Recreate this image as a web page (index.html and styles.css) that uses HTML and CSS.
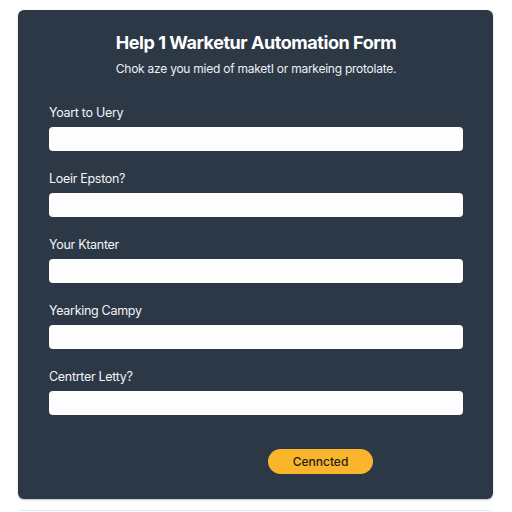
FILE: index.html
```html
<!DOCTYPE html>
<html lang="en">
<head>
  <meta charset="UTF-8">
  <title>Marketing Automation Form</title>
  <link rel="stylesheet" href="styles.css">
</head>
<body>
  <div class="card">
    <h2 class="title">Help 1 Warketur Automation Form</h2>
    <p class="subtitle">Chok aze you mied of maketI or markeing protolate.</p>

    <div class="fields">
      <label class="field">
        <span class="field-label">Yoart to Uery</span>
        <input type="text" class="field-input">
      </label>
      <label class="field">
        <span class="field-label">Loeir Epston?</span>
        <input type="text" class="field-input">
      </label>
      <label class="field">
        <span class="field-label">Your Ktanter</span>
        <input type="text" class="field-input">
      </label>
      <label class="field">
        <span class="field-label">Yearking Campy</span>
        <input type="text" class="field-input">
      </label>
      <label class="field">
        <span class="field-label">Centrter Letty?</span>
        <input type="text" class="field-input">
      </label>
    </div>

    <div class="actions">
      <button class="submit-button">Cenncted</button>
    </div>
  </div>

  <!-- 次のカードの上端 -->
  <div class="next-card"></div>
</body>
</html>
```

FILE: styles.css
```css
/* 全体 */
body {
  margin: 0;
  padding: 10px 19px 0 18px;
  background: #ffffff;
  font-family: 'Inter', 'Liberation Sans', sans-serif;
  box-sizing: border-box;
}

/* カード */
.card {
  height: 489px;
  box-sizing: border-box;
  padding: 22px 30px 0 31px;
  background: #2d3846;
  border-radius: 6px;
  box-shadow: 0 1px 2px rgba(0, 0, 0, 0.25);
}

.title {
  margin: 0;
  font-size: 18px;
  line-height: 22px;
  font-weight: 700;
  color: #ffffff;
  text-align: center;
  letter-spacing: -0.45px;
}

.subtitle {
  margin: 7px 0 0;
  font-size: 12px;
  line-height: 16px;
  color: #eef0f3;
  text-align: center;
  letter-spacing: -0.25px;
}

/* 入力欄 */
.fields {
  display: flex;
  flex-direction: column;
  gap: 20px;
  margin-top: 28px;
}

.field {
  display: flex;
  flex-direction: column;
  gap: 6px;
}

.field-label {
  font-size: 12.5px;
  line-height: 16px;
  color: #f3f4f6;
  letter-spacing: -0.3px;
}

.field-input {
  height: 24px;
  box-sizing: border-box;
  width: 100%;
  border: none;
  border-radius: 4px;
  background: #fdfdfd;
  padding: 0 8px;
}

/* ボタン */
.actions {
  display: flex;
  justify-content: flex-end;
  padding-right: 90px;
  margin-top: 34px;
}

.submit-button {
  width: 105px;
  height: 25px;
  border: none;
  border-radius: 13px;
  background: #fbb52d;
  color: #221d14;
  font-family: 'Inter', 'Liberation Sans', sans-serif;
  font-size: 12px;
  font-weight: 500;
  cursor: pointer;
}

.next-card {
  margin-top: 11px;
  height: 4px;
  border-top: 1px solid #dfe9f2;
  border-radius: 4px 4px 0 0;
}
```
